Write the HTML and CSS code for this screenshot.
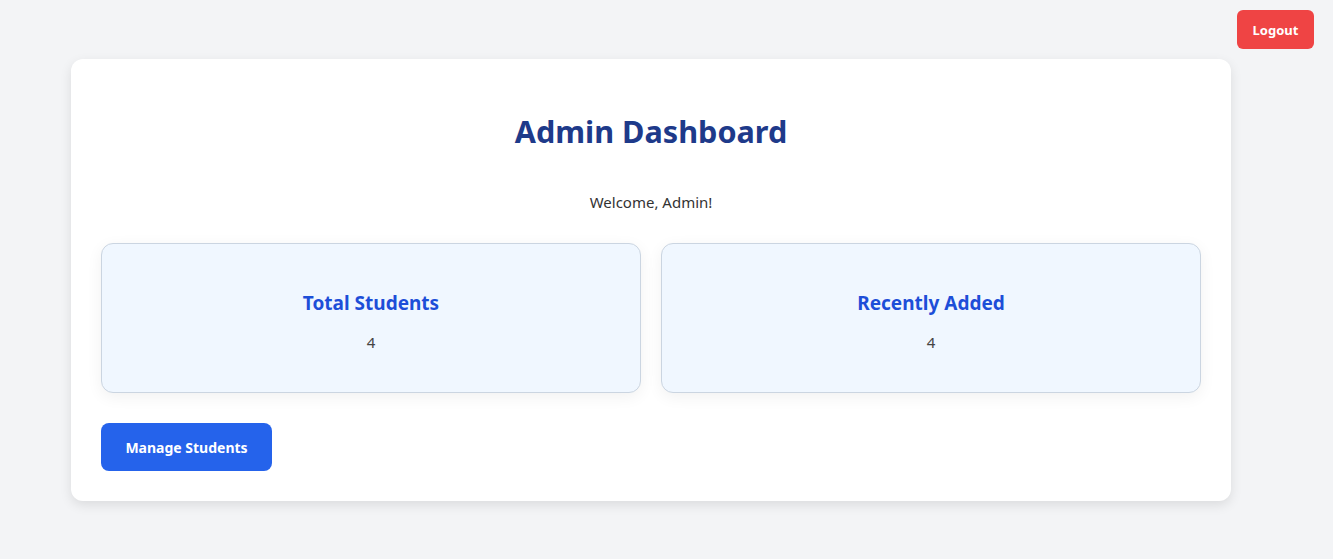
FILE: index.html
```html
<!DOCTYPE html>
<html lang="en">
<head>
<meta charset="utf-8">
<title>Admin Dashboard</title>
<link rel="stylesheet" href="styles.css">
</head>
<body>
  <button class="logout">Logout</button>
  <main class="dashboard">
    <h1 class="title">Admin Dashboard</h1>
    <p class="welcome">Welcome, Admin!</p>
    <section class="stats">
      <div class="stat">
        <h3 class="stat-title">Total Students</h3>
        <p class="stat-value">4</p>
      </div>
      <div class="stat">
        <h3 class="stat-title">Recently Added</h3>
        <p class="stat-value">4</p>
      </div>
    </section>
    <button class="manage">Manage Students</button>
  </main>
</body>
</html>
```
FILE: styles.css
```css
* { box-sizing: border-box; }
html, body { margin: 0; }
body {
  background: #f3f4f6;
  font-family: "Noto Sans", "Open Sans", sans-serif;
  color: #333;
  padding: 59px 71px 40px;
  min-height: 559px;
}
.logout {
  position: absolute;
  top: 10px;
  right: 19px;
  width: 77px;
  height: 39px;
  border: none;
  border-radius: 6px;
  background: #ef4444;
  color: #fff;
  font-family: inherit;
  font-weight: 700;
  font-size: 13px;
  cursor: pointer;
}
.dashboard {
  width: 1160px;
  background: #fff;
  border-radius: 12px;
  box-shadow: 0 4px 12px rgba(0,0,0,0.1);
  padding: 30px;
  display: flex;
  flex-direction: column;
}
.title {
  margin: 0;
  padding-top: 21px;
  font-size: 30.6px;
  line-height: 43px;
  font-weight: 700;
  color: #1e3a8a;
  text-align: center;
}
.welcome {
  margin: 37px 0 0;
  font-size: 15px;
  line-height: 24px;
  text-align: center;
  color: #333;
}
.stats {
  margin-top: 29px;
  display: grid;
  grid-template-columns: 1fr 1fr;
  gap: 20px;
}
.stat {
  height: 150px;
  background: #f0f7ff;
  border: 1px solid #cbd5e1;
  border-radius: 12px;
  box-shadow: 0 4px 16px rgba(0,0,0,0.06);
  padding: 45px 20px 0;
  text-align: center;
}
.stat-title {
  margin: 0 0 12px;
  font-size: 19px;
  line-height: 28px;
  font-weight: 700;
  color: #1d4ed8;
}
.stat-value {
  margin: 0;
  font-size: 15px;
  line-height: 26px;
  color: #444;
}
.manage {
  align-self: flex-start;
  margin-top: 30px;
  width: 171px;
  height: 48px;
  border: none;
  border-radius: 8px;
  background: #2563eb;
  color: #fff;
  font-family: inherit;
  font-weight: 700;
  font-size: 14px;
  cursor: pointer;
}
```
